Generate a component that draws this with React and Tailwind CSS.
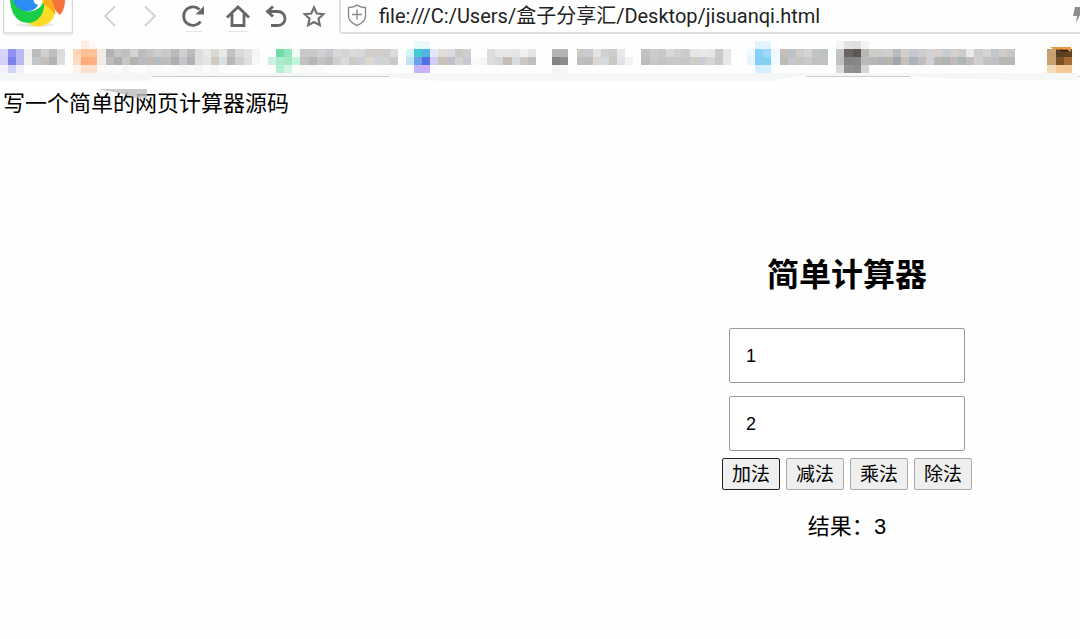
import React, { useState } from 'react';

// Bookmarks are painted as coarse cells: [first column, row, colours]
const CELLS = [
  [0, 1, 'd5d5fb 8f92ee b9b9f4 f4f0f0 bcbcbc d3d1cf bdbdbd dadada'],
  [0, 2, 'd0d0fb 7c80ea b9b9f4 f4f0ee c3c5c8 c4bdba b1b3b2 dcddde'],
  [0, 3, 'f2f2fd d3d4fa f0f0fd'],
  [10, 0, 'feece0 fffaf6'],
  [9, 1, 'fdd6ba fec094 fec094 f3ece6 b0b0b0 c5c5c5 bfbfc0 d6d3d0 bdbdbd c5c5c5 d0cdcb c8c8c8 b9babd cfcfcf bcbcbc dcdde0 e9e9e7 dcd9d4 e8e8e8 c2c1bf dbdad8 e3e3e3 f5f5f5'],
  [9, 2, 'fddcc4 feab78 fdb183 f3ece6 bdbdbd adafb2 c6c6c6 b5b3b0 b9bcbf c0bab6 b6bbbf c0bcb9 acaeb2 c4c6c9 b1b1b1 dcdde0 e4e4e2 cfc9c3 dadfe3 b8b7b5 cfcfcf dfdfdf f7f7f7'],
  [9, 3, 'fff4ec fee0cc fde0ce fbfbfb fafafa fcfcfc f6f6f6 fbfbfb fcfcfc f8f8f8 fafafa fcfcfc fafafa f7f7f7 fafafa f6f6f6 fcfcfc f7f7f7'],
  [34, 0, 'f8fefb f8fefb'],
  [34, 1, '73dca8 8ee6ba f0fdf6 cbc9c8 c8c8ca d2d0d2 c7c9cd d9d9d9 d4d4d6 dbdbd9 d9d9d9 d3cecb d0cfcd d0cdc9 dbdbdb'],
  [33, 2, 'c9f3de ade9ca a1e8c4 c2f5de c6c1be b4b6ba c6c4c2 bcbcc0 cfcfd1 d9dadb cdcbc9 cfcfd3 ddd6d1 cfd3d7 d3d3d1 c9c9c9'],
  [34, 3, 'b4efd1 d2f4e3 fefefe fafafa fafafa fafafa'],
  [51, 0, 'e8f9f9 e8f9f9'],
  [50, 1, 'd5f1f5 43cbd5 50b4dc e1e8fc e0dcd6 dadce0 cbc8c5 cdcfd3'],
  [50, 2, 'c4dff8 6a9fe9 5070e3 d5cdf6 cbc3bb bfc3c9 d3d3d3 c6c9cd fafafa f6f6f6'],
  [51, 3, 'c4b4fb ccb0fb'],
  [60, 1, 'dcdcdc e6e6e6 e8e8e8 e5e5e5 eef0f2 e5e5e5'],
  [60, 2, 'dddddd d7d7d7 c2bdb9 d9dcdf c9c8c7 bcc0c0'],
  [68, 1, 'b4b4b4 b4b4b4 fefefe cdc8c8 c9cbd0 e4e4e4 d0d0d0 cfcdca e6e7e9'],
  [68, 2, '848484 8c8c8c fefefe c0bfbe bfbdbb dbd7d1 d3dadd c8c7c5 dfe2e6 f4f2f1'],
  [68, 3, 'f5f5f5 f7f7f7'],
  [79, 1, 'c3c3c3 cfcdcb c9c9c9 d9d9d9 cfcfd0 cbccce e6e6e6 e9e9e9 e6e6e6 c9c9c7 e8e6e5'],
  [79, 2, 'bfbdbb c9c9c7 c4c4c4 c6c9cb c8c8c8 c5c7ca d0ccc8 cacdd1 d6d6d6 c9c9c7 e9e7e6'],
  [93, 0, 'e3f4fe e3f4fe'],
  [92, 1, 'eef8fe 85cff8 9edaf6 f0f9fd c3c0be bdc2c7 cccccc d4d3d5 c4c3c1 bdc2c5'],
  [92, 2, 'e6f5fe 86cef6 85d1f3 f0fafe bdbbb9 c3c6ca c6c4c2 c9c9cb c1c1bf bfc1c3'],
  [93, 3, 'd4effd d4effd'],
  [103, 0, 'f5f5f3 e2e2e2 e0e0e0 f4f4f4'],
  [103, 1, 'c4c4c2 6b6361 5a5756 b7b7b7 d0cdc9 c8cdd0 d0cfcd b9bcbf d4cfcc c4c8ce d0cecc d0d2d6 d6cfcb c6cad1 d2d1ce c9cacc e9e9e7 c9cdcf d4d4d4 c2c5c9 d1ccc9 c4c6c9'],
  [103, 2, 'c0c0be 848484 868887 bababa bab8b5 b1b4b6 b6b4b1 a4a6ab c4c1bd acb2ba c0bfbd d0d1d4 b9b6b4 b1b2b4 c0bbb8 afb4b7 c1bebc d0d1d4 c3c3c3 c1c1c5 bab6b4 b5b7bb'],
  [103, 3, 'dadcdb 929291 8b8d8c d4d6d4'],
  [129, 1, 'c9a070 5c3e20 60401f'],
  [129, 2, 'c9a070 7a5026 a66c2e'],
  [129, 3, 'f5dcbd f2c998 f2c998'],
];

const OPERATIONS = [
  { label: '加法', run: (a, b) => a + b },
  { label: '减法', run: (a, b) => a - b },
  { label: '乘法', run: (a, b) => a * b },
  { label: '除法', run: (a, b) => (b === 0 ? '除数不能为零' : a / b) },
];

function BrowserLogo() {
  return (
    <svg width="70" height="36" viewBox="0 0 70 36" className="block" aria-hidden="true">
      <path d="M0.5 0V33H69.5V0" fill="#fff" stroke="#d9d9d9" strokeWidth="1.5" />
      <path d="M1 35H69" stroke="#f2f2f2" strokeWidth="2" />
      <ellipse cx="32" cy="25" rx="19" ry="2" fill="#e9e9e9" />
      <path d="M46 0H62C62 6 60 12 57 15C53 12 50 7 46 0Z" fill="#f6743a" />
      <path d="M39 0H48C54 9 54 22 39 26C32 27 26 25 25 22C34 20 39 12 39 0Z" fill="#fddc25" />
      <path d="M41 0H47C51 5 53 10 52 15C50 11 46 7 41 4Z" fill="#fbab1f" />
      <path d="M7 0C8 14 14 23 26 23C36 22 42 13 41 2C38 8 30 13 22 11L10 0Z" fill="#16cf45" />
      <path d="M10 0C12 6 17 11 23 11C28 12 33 9 35 5L32 0Z" fill="#2b8df5" />
      <circle cx="35" cy="0" r="4.5" fill="#fff" />
    </svg>
  );
}

function NavButton({ label, className, children }) {
  return (
    <button type="button" aria-label={label} className={`flex h-8 shrink-0 items-center justify-center ${className}`}>
      <svg width="28" height="32" viewBox="0 0 28 32" fill="none" strokeWidth="2.8">
        {children}
      </svg>
    </button>
  );
}

function Toolbar() {
  return (
    <div className="flex h-9 items-start">
      <div className="ml-[3px] mr-[22px] shrink-0">
        <BrowserLogo />
      </div>
      <NavButton label="后退" className="mr-3 w-7">
        <path d="M20 6.5L10 16L20 26" stroke="#d4d4d4" strokeWidth="2" />
      </NavButton>
      <NavButton label="前进" className="mr-4 w-7">
        <path d="M10 6.5L20 16L10 26" stroke="#d4d4d4" strokeWidth="2" />
      </NavButton>
      <NavButton label="刷新" className="mr-4 w-7">
        <path d="M20.5 9.5A9.3 9.3 0 1 0 21.5 21.5" stroke="#666" />
        <path d="M25 6V14.5H16.5Z" fill="#666" />
        <path d="M7 31.5H23" stroke="#e4e4e4" strokeWidth="1" />
      </NavButton>
      <NavButton label="主页" className="mr-3 w-7">
        <path d="M4 17.5L15 7L26 17.5M9 14V25.5H21V14" stroke="#666" />
        <path d="M5 31.5H26" stroke="#e4e4e4" strokeWidth="1" />
      </NavButton>
      <NavButton label="撤销" className="mr-2 w-7">
        <path d="M10 6.5L4.5 11.5L10 16.5M4.5 11.5H15A7 7 0 0 1 15 25.5H8" stroke="#666" />
      </NavButton>
      <NavButton label="收藏" className="mr-3 w-7">
        <path d="M15 7.5L17.8 13.5L24.3 14.2L19.5 18.7L20.8 25.2L15 22L9.2 25.2L10.5 18.7L5.7 14.2L12.2 13.5Z" stroke="#707070" strokeWidth="2.2" />
      </NavButton>
      <div className="flex h-[34px] min-w-0 flex-1 items-center rounded-bl-sm border-b-2 border-l-2 border-[#dedede]">
        <svg width="20" height="24" viewBox="0 0 20 24" fill="none" stroke="#8c8c8c" strokeWidth="1.4" className="ml-1.5 shrink-0" aria-hidden="true">
          <path d="M10 1C7.5 3 4.5 3.5 1.5 3.5V12C1.5 17 5.5 19.5 10 21.5C14.5 19.5 18.5 17 18.5 12V3.5C15.5 3.5 12.5 3 10 1Z" />
          <path d="M10 5.5V15.5M5 10.5H15" />
        </svg>
        <input
          aria-label="地址栏"
          defaultValue="file:///C:/Users/盒子分享汇/Desktop/jisuanqi.html"
          className="ml-3 min-w-0 flex-1 bg-transparent font-[Roboto,'Noto_Sans_CJK_SC',sans-serif] text-[20px] leading-8 text-[#222] outline-none"
        />
        <svg width="7" height="20" viewBox="0 0 7 20" className="shrink-0" aria-hidden="true">
          <path d="M2 1H7V9L3 17L4 10H0Z" fill="#8c8c8c" />
        </svg>
      </div>
    </div>
  );
}

function BookmarkBar() {
  return (
    <div className="h-[46px] overflow-hidden">
      <svg width="1080" height="46" viewBox="0 36 1080 46" aria-hidden="true">
        <path d="M0 73H1078V80.5H1030L980 79L920 77.5L908 76H805L780 79L775 81H440L400 78L370 76H155L148 81H0Z" fill="#f5f7f6" />
        <path d="M152 76.5H389M806 76.5H910M1078 76.5H1080" stroke="#cbcfcd" />
        <g transform="translate(0 40.6) scale(8.12)" shapeRendering="crispEdges">
          {CELLS.map(([col, row, colors]) =>
            colors.split(' ').map((color, i) => (
              <rect key={`${col + i}-${row}`} x={col + i} y={row} width="1" height="1" fill={`#${color}`} />
            ))
          )}
        </g>
        <path d="M1050 47H1071V52L1067 49.5H1054Z" fill="#f0973a" />
        <path d="M1060 50L1063 51L1068 50.5" stroke="#17120c" strokeWidth="1" fill="none" />
      </svg>
    </div>
  );
}

function Calculator() {
  const [first, setFirst] = useState('1');
  const [second, setSecond] = useState('2');
  const [result, setResult] = useState(3);
  const [active, setActive] = useState('加法');

  const calculate = (op) => {
    setActive(op.label);
    setResult(op.run(Number(first), Number(second)));
  };

  const inputClass =
    'h-[55px] w-[236px] rounded-[2px] border border-[#9b9b9b] bg-white px-4 pt-0.5 text-[18px] outline-none';

  return (
    <main className="ml-auto flex w-[466px] max-w-full flex-col items-center pt-[131px]">
      <h1 className="text-[32px] font-bold leading-[48px]">简单计算器</h1>
      <input aria-label="第一个数字" value={first} onChange={(e) => setFirst(e.target.value)} className={`mt-[29px] ${inputClass}`} />
      <input aria-label="第二个数字" value={second} onChange={(e) => setSecond(e.target.value)} className={`mt-[13px] ${inputClass}`} />
      <div className="mt-[7px] flex gap-1.5">
        {OPERATIONS.map((op) => (
          <button
            key={op.label}
            type="button"
            onClick={() => calculate(op)}
            className={`h-8 w-[58px] rounded-[2px] border bg-[#efefef] pt-0.5 text-[19px] leading-7 ${
              active === op.label ? 'border-[#222]' : 'border-[#aaa]'
            }`}
          >
            {op.label}
          </button>
        ))}
      </div>
      <p className="mt-[21px] text-[22px] leading-8">结果：{result}</p>
    </main>
  );
}

export default function App() {
  return (
    <div className="min-h-screen overflow-hidden bg-[#fefefe] font-['Liberation_Sans','Noto_Sans_CJK_SC',sans-serif] text-black">
      <header>
        <Toolbar />
        <BookmarkBar />
      </header>
      <div className="relative px-[3px] pt-1.5">
        <p className="text-[22px] leading-8">写一个简单的网页计算器源码</p>
        <svg width="50" height="10" viewBox="0 0 50 10" className="absolute left-[97px] top-[7px]" aria-hidden="true">
          <path d="M0 0H50V9H40L22 4Z" fill="#bdbdbd" opacity=".8" />
        </svg>
      </div>
      <Calculator />
    </div>
  );
}
